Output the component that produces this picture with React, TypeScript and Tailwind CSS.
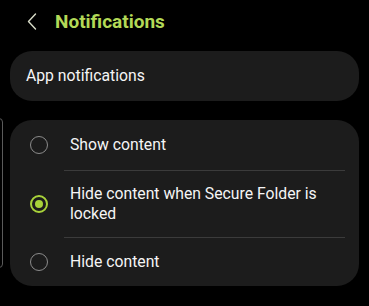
import React, { useState } from "react";

type Opcion = { id: string; label: string };

const opciones: Opcion[] = [
  { id: "show", label: "Show content" },
  { id: "hide-locked", label: "Hide content when Secure Folder is locked" },
  { id: "hide", label: "Hide content" },
];

const Radio: React.FC<{ checked: boolean }> = ({ checked }) =>
  checked ? (
    <span className="shrink-0 w-[18px] h-[18px] rounded-full border-[2.5px] border-[#a8d23a] flex items-center justify-center">
      <span className="w-[8px] h-[8px] rounded-full bg-[#a8d23a]" />
    </span>
  ) : (
    <span className="shrink-0 w-[18px] h-[18px] rounded-full border-[1.5px] border-[#8c8c8c]" />
  );

const App: React.FC = () => {
  const [seleccion, setSeleccion] = useState("hide-locked");

  return (
    <div
      className="relative w-[369px] h-[306px] bg-black overflow-hidden text-[#f5f5f5]"
      style={{ fontFamily: "Roboto, 'Noto Sans', sans-serif" }}
    >
      {/* borde de la ventana de atrás */}
      <div className="absolute left-[-8px] top-[118px] w-[11px] h-[150px] rounded-[4px] border border-[#5a5a5a]" />

      {/* Cabecera */}
      <div className="flex items-center h-[44px] pl-[27px]">
        <svg width="10" height="17" viewBox="0 0 10 17" fill="none" className="mt-[-1px]">
          <path d="M8.5 1 L1.5 8.5 L8.5 16" stroke="#d8dcc8" strokeWidth="1.4" strokeLinecap="round" strokeLinejoin="round" />
        </svg>
        <h1 className="ml-[18px] text-[19px] font-bold text-[#b3d957]">Notifications</h1>
      </div>

      {/* App notifications */}
      <div className="mx-[10px] mt-[7px] h-[50px] rounded-[22px] bg-[#1c1c1c] flex items-center px-[16px]">
        <span className="text-[15.75px]">App notifications</span>
      </div>

      {/* Opciones */}
      <div className="mx-[10px] mt-[19px] rounded-[22px] bg-[#1c1c1c] overflow-hidden">
        {opciones.map((op, i) => (
          <div key={op.id}>
            {i > 0 && <div className="ml-[54px] mr-[14px] h-px bg-[#3b3b3b]" />}
            <button
              onClick={() => setSeleccion(op.id)}
              className={`w-full flex items-center text-left pl-[20px] pr-[30px] py-[13px] ${
                i === opciones.length - 1 ? "min-h-[48px]" : "min-h-[50px]"
              }`}
            >
              <Radio checked={seleccion === op.id} />
              <span className="ml-[22px] text-[15.75px] leading-[20px]">{op.label}</span>
            </button>
          </div>
        ))}
      </div>
    </div>
  );
};

export default App;
